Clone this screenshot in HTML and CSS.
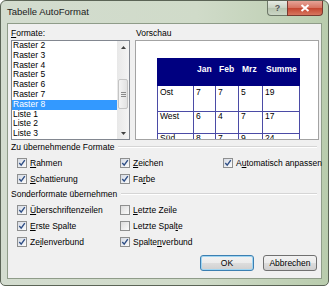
FILE: index.html
```html
<!DOCTYPE html>
<html lang="de">
<head>
	<meta charset="UTF-8">
	<title>Tabelle AutoFormat</title>
	<link rel="stylesheet" href="styles.css">
</head>
<body>

	<div class="window">
		<div class="titlebar">
			<span class="title">Tabelle AutoFormat</span>
			<div class="caption">
				<span class="cap help">?</span>
				<span class="cap close">
					<svg width="10" height="8" viewBox="0 0 10 8"><path d="M1.5 1 L8.5 7 M8.5 1 L1.5 7" stroke="#fff" stroke-width="2" fill="none"/></svg>
				</span>
			</div>
		</div>

		<div class="client">
			<div class="top">
				<div class="col-list">
					<div class="label"><u>F</u>ormate:</div>
					<div class="listbox">
						<ul class="items">
							<li>Raster 2</li>
							<li>Raster 3</li>
							<li>Raster 4</li>
							<li>Raster 5</li>
							<li>Raster 6</li>
							<li>Raster 7</li>
							<li class="selected">Raster 8</li>
							<li>Liste 1</li>
							<li>Liste 2</li>
							<li>Liste 3</li>
						</ul>
						<div class="scrollbar">
							<div class="arrow">
								<svg width="5" height="3" viewBox="0 0 5 3"><path d="M0 3 L2.5 0 L5 3 Z" fill="#404040"/></svg>
							</div>
							<div class="track">
								<div class="thumb">
									<svg width="5" height="5" viewBox="0 0 5 5"><path d="M0 0.5 H5 M0 2.5 H5 M0 4.5 H5" stroke="#8a8a8a" stroke-width="1"/></svg>
								</div>
							</div>
							<div class="arrow">
								<svg width="5" height="3" viewBox="0 0 5 3"><path d="M0 0 L2.5 3 L5 0 Z" fill="#404040"/></svg>
							</div>
						</div>
					</div>
				</div>
				<div class="col-preview">
					<div class="label preview-label">Vorschau</div>
					<div class="preview">
						<table class="sample">
							<colgroup>
								<col class="c-name">
								<col class="c-m1">
								<col class="c-m2">
								<col class="c-m3">
								<col class="c-sum">
							</colgroup>
							<tr class="head">
								<th></th><th>Jan</th><th>Feb</th><th>Mrz</th><th>Summe</th>
							</tr>
							<tr class="r1">
								<td>Ost</td><td>7</td><td>7</td><td>5</td><td>19</td>
							</tr>
							<tr class="r2">
								<td>West</td><td>6</td><td>4</td><td>7</td><td>17</td>
							</tr>
							<tr class="r3">
								<td>Süd</td><td>8</td><td>7</td><td>9</td><td>24</td>
							</tr>
						</table>
					</div>
				</div>
			</div>

			<div class="group">Zu übernehmende Formate</div>
			<div class="checks">
				<label class="cb"><span class="box on"><svg width="8" height="8" viewBox="0 0 8 8"><path d="M1.3 4 L3.2 6.2 L6.8 1.2" stroke="#2f4f86" stroke-width="1.4" fill="none"/></svg></span><span><u>R</u>ahmen</span></label>
				<label class="cb"><span class="box on"><svg width="8" height="8" viewBox="0 0 8 8"><path d="M1.3 4 L3.2 6.2 L6.8 1.2" stroke="#2f4f86" stroke-width="1.4" fill="none"/></svg></span><span><u>Z</u>eichen</span></label>
				<label class="cb"><span class="box on"><svg width="8" height="8" viewBox="0 0 8 8"><path d="M1.3 4 L3.2 6.2 L6.8 1.2" stroke="#2f4f86" stroke-width="1.4" fill="none"/></svg></span><span>A<u>u</u>tomatisch anpassen</span></label>
				<label class="cb"><span class="box on"><svg width="8" height="8" viewBox="0 0 8 8"><path d="M1.3 4 L3.2 6.2 L6.8 1.2" stroke="#2f4f86" stroke-width="1.4" fill="none"/></svg></span><span><u>S</u>chattierung</span></label>
				<label class="cb"><span class="box on"><svg width="8" height="8" viewBox="0 0 8 8"><path d="M1.3 4 L3.2 6.2 L6.8 1.2" stroke="#2f4f86" stroke-width="1.4" fill="none"/></svg></span><span>Fa<u>r</u>be</span></label>
			</div>

			<div class="group">Sonderformate übernehmen</div>
			<div class="checks">
				<label class="cb"><span class="box on"><svg width="8" height="8" viewBox="0 0 8 8"><path d="M1.3 4 L3.2 6.2 L6.8 1.2" stroke="#2f4f86" stroke-width="1.4" fill="none"/></svg></span><span><u>Ü</u>berschriftenzeilen</span></label>
				<label class="cb"><span class="box"></span><span><u>L</u>etzte Zeile</span></label>
				<span></span>
				<label class="cb"><span class="box on"><svg width="8" height="8" viewBox="0 0 8 8"><path d="M1.3 4 L3.2 6.2 L6.8 1.2" stroke="#2f4f86" stroke-width="1.4" fill="none"/></svg></span><span><u>E</u>rste Spalte</span></label>
				<label class="cb"><span class="box"></span><span>Letzte Spal<u>t</u>e</span></label>
				<span></span>
				<label class="cb"><span class="box on"><svg width="8" height="8" viewBox="0 0 8 8"><path d="M1.3 4 L3.2 6.2 L6.8 1.2" stroke="#2f4f86" stroke-width="1.4" fill="none"/></svg></span><span>Ze<u>i</u>lenverbund</span></label>
				<label class="cb"><span class="box on"><svg width="8" height="8" viewBox="0 0 8 8"><path d="M1.3 4 L3.2 6.2 L6.8 1.2" stroke="#2f4f86" stroke-width="1.4" fill="none"/></svg></span><span>Spalte<u>n</u>verbund</span></label>
			</div>

			<div class="buttons">
				<button class="btn default">OK</button>
				<button class="btn">Abbrechen</button>
			</div>
		</div>
	</div>

</body>
</html>
```

FILE: styles.css
```css
body {
	margin: 0;
	font-family: "Liberation Sans", Arial, sans-serif;
	font-size: 8.5px;
	color: #000;
	background: #fff;
}

.window {
	width: 329px;
	height: 286px;
	box-sizing: border-box;
	border: 1px solid #5b6456;
	border-radius: 6px 6px 5px 5px;
	background: linear-gradient(90deg, #d3dccf 0%, #d0dbc9 60%, #b9ccad 100%);
	padding: 0 6px 6px 6px;
	display: flex;
	flex-direction: column;
}

/* title bar */

.titlebar {
	height: 22px;
	flex-shrink: 0;
	display: flex;
	justify-content: space-between;
	align-items: flex-start;
}

.title {
	font-size: 9.5px;
	line-height: 22px;
	color: #1b1b1b;
}

.caption {
	display: flex;
	margin-right: -1px;
}

.cap {
	height: 15px;
	box-sizing: border-box;
	display: flex;
	align-items: center;
	justify-content: center;
	border: 1px solid #6d7868;
	border-top: 0;
}

.help {
	width: 20px;
	border-right: 0;
	border-radius: 0 0 0 4px;
	background: linear-gradient(#e6ebe3, #c8d2c3 50%, #b7c4b0 51%, #cbd6c5);
	color: #555;
	font-size: 9px;
	font-weight: bold;
}

.close {
	width: 36px;
	border-color: #7b3a30;
	border-radius: 0 0 4px 0;
	background: linear-gradient(#e6a397, #d6725f 50%, #c4452f 51%, #d7765f);
}

/* client area */

.client {
	flex: 1;
	background: #f0f0f0;
	border: 1px solid #8f9c89;
	padding: 4px 2px 0 3px;
	display: flex;
	flex-direction: column;
}

.top {
	display: flex;
	gap: 5px;
}

.col-list {
	width: 119px;
}

.col-preview {
	width: 184px;
}

.label {
	height: 12px;
	line-height: 10px;
}

.preview-label {
	padding-left: 1px;
}

.listbox {
	height: 100px;
	box-sizing: border-box;
	border: 1px solid #828790;
	background: #fff;
	display: flex;
}

.items {
	flex: 1;
	list-style: none;
	margin: 0;
	padding: 0;
}

.items li {
	height: 9.8px;
	line-height: 9.8px;
	padding-left: 1px;
	white-space: nowrap;
}

.items li.selected {
	background: #3399ff;
	color: #fff;
}

.scrollbar {
	width: 12px;
	display: flex;
	flex-direction: column;
	background: linear-gradient(90deg, #e8e8e8, #f4f4f4);
}

.arrow {
	height: 12px;
	display: flex;
	align-items: center;
	justify-content: center;
}

.track {
	flex: 1;
	padding-top: 26px;
}

.thumb {
	height: 30px;
	margin: 0 1px;
	box-sizing: border-box;
	border: 1px solid #c4c4c4;
	border-radius: 2px;
	background: linear-gradient(90deg, #f4f4f4, #e2e2e2);
	display: flex;
	align-items: center;
	justify-content: center;
}

.preview {
	height: 100px;
	box-sizing: border-box;
	border: 1px solid #a3a3a3;
	background: #fff;
	padding: 17px 0 0 21px;
	overflow: hidden;
}

/* sample table */

.sample {
	border-collapse: collapse;
	table-layout: fixed;
	width: 142px;
	line-height: 9px;
}

.c-name { width: 36px; }
.c-m1 { width: 22px; }
.c-m2 { width: 23px; }
.c-m3 { width: 24px; }
.c-sum { width: 37px; }

.sample th {
	background: #000080;
	border: 1px solid #000080;
	color: #fff;
	font-weight: bold;
	text-align: left;
	vertical-align: top;
	padding: 6px 0 0 3px;
	height: 20px;
	white-space: nowrap;
}

.sample td {
	border: 1px solid #4b4ba6;
	vertical-align: top;
	padding: 0 0 0 2px;
	white-space: nowrap;
}

.sample .r1 td { height: 23px; padding-top: 2px; }
.sample .r2 td { height: 21px; }
.sample .r3 td { height: 21px; }

/* option groups */

.group {
	display: flex;
	align-items: center;
	gap: 4px;
	height: 12px;
	line-height: 12px;
	margin-top: 1px;
}

.group:after {
	content: "";
	flex: 1;
	border-top: 1px solid #d5d5d5;
	border-bottom: 1px solid #fff;
	margin-right: 2px;
}

.checks {
	display: grid;
	grid-template-columns: 103px 103px 1fr;
	padding-left: 6px;
	margin-top: 2px;
}

.cb {
	display: flex;
	align-items: center;
	gap: 3px;
	height: 16px;
	white-space: nowrap;
}

.box {
	width: 10px;
	height: 10px;
	box-sizing: border-box;
	border: 1px solid #8e8f8f;
	background: linear-gradient(135deg, #dcdcdc, #fbfbfb);
	display: flex;
	align-items: center;
	justify-content: center;
}

.box.on {
	background: linear-gradient(135deg, #d6dbe4, #fbfbfb);
}

/* buttons */

.buttons {
	display: flex;
	justify-content: flex-end;
	gap: 9px;
	margin-top: 5px;
	padding-right: 2px;
}

.btn {
	width: 54px;
	height: 16px;
	box-sizing: border-box;
	border: 1px solid #707070;
	border-radius: 3px;
	background: linear-gradient(#f2f2f2 0%, #ebebeb 50%, #dddddd 51%, #cfcfcf 100%);
	font-family: "Liberation Sans", Arial, sans-serif;
	font-size: 8.5px;
	color: #000;
	padding: 0;
	line-height: 14px;
}

.btn.default {
	border-color: #3c7fb1;
	box-shadow: inset 0 0 0 1px #9fd5f2;
}
```
